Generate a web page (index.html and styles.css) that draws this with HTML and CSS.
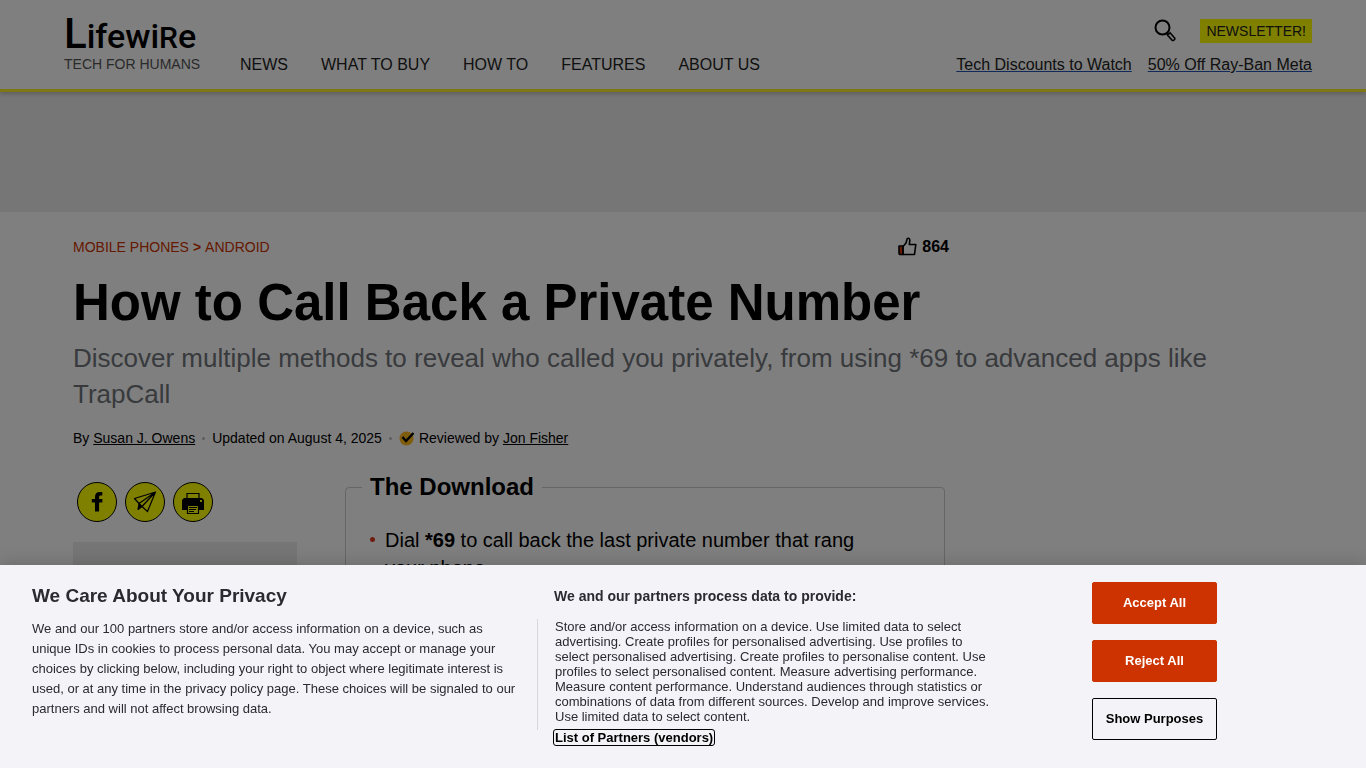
FILE: index.html
```html
<!DOCTYPE html>
<html lang="en">
<head>
    <meta charset="UTF-8">
    <meta name="viewport" content="width=device-width, initial-scale=1.0">
    <title>How to Call Back a Private Number</title>
    <link rel="stylesheet" href="styles.css">
</head>
<body>

<header class="header">
    <a class="brand" href="#">
        <span class="logo"><span class="logo-first">L</span>ifewi<span class="logo-cap">r</span>e</span>
        <span class="tagline">TECH FOR HUMANS</span>
    </a>
    <nav class="main-nav">
        <a href="#">NEWS</a>
        <a href="#">WHAT TO BUY</a>
        <a href="#">HOW TO</a>
        <a href="#">FEATURES</a>
        <a href="#">ABOUT US</a>
    </nav>
    <div class="header-side">
        <div class="header-tools">
            <button class="search-btn" type="button" aria-label="Search">
                <svg width="22" height="24" viewBox="0 0 22 24" fill="none" stroke="#000">
                    <circle cx="8.5" cy="8.5" r="7" stroke-width="2"/>
                    <path d="M12.800 14.200l1.600 1.800" stroke-width="2"/>
                    <path d="M13.500 16l2.600-2.200 4.500 5.200c.9 1.200-1.500 3.400-2.500 2.200z" stroke-width="1.600"/>
                </svg>
            </button>
            <a class="newsletter" href="#">NEWSLETTER!</a>
        </div>
        <div class="header-links">
            <a href="#">Tech Discounts to Watch</a>
            <a href="#">50% Off Ray-Ban Meta</a>
        </div>
    </div>
</header>

<div class="ad-banner"></div>

<main class="article">
    <div class="article-top">
        <nav class="breadcrumbs">
            <a href="#">MOBILE PHONES</a>
            <b>&gt;</b>
            <a href="#">ANDROID</a>
        </nav>
        <div class="likes">
            <svg width="19" height="20" viewBox="0 0 19 20" stroke="#000" stroke-width="1.6" stroke-linejoin="round">
                <path d="M1 9h4v8.500H2Q1 17.500 1 16z" fill="#cc3300"/>
                <path d="M5 9.500L8 6l1.200-4.200c1-1.200 2.700-.3 2.600 1.500L11.300 7.500h6.500l-1.300 10H5z" fill="none"/>
            </svg>
            <span>864</span>
        </div>
    </div>

    <h1>How to Call Back a Private Number</h1>
    <p class="subtitle">Discover multiple methods to reveal who called you privately, from using *69 to advanced apps like TrapCall</p>

    <div class="byline">
        <span>By <a href="#">Susan J. Owens</a></span>
        <i class="dot"></i>
        <span>Updated on August 4, 2025</span>
        <i class="dot"></i>
        <span class="reviewed">
            <svg width="16" height="16" viewBox="0 0 16 16" fill="none">
                <circle cx="7.500" cy="8.500" r="7" fill="#ffb81c"/>
                <path d="M3.500 7l3.500 4L14.500 3" stroke="#000" stroke-width="2.400"/>
            </svg>
            <span>Reviewed by <a href="#">Jon Fisher</a></span>
        </span>
    </div>

    <div class="article-body">
        <aside class="sidebar">
            <div class="share">
                <button type="button" aria-label="Share on Facebook">
                    <svg width="38" height="38" viewBox="0 0 38 38">
                        <path d="M17 28.500V19.500h-3.200v-3.500H17v-2.300c0-3 1.700-4.700 4.500-4.700h2.800v3.600h-1.600c-1.200 0-1.600.6-1.600 1.600v1.800h3.300v3.500h-3.300v9z"/>
                    </svg>
                </button>
                <button type="button" aria-label="Share by email">
                    <svg width="38" height="38" viewBox="0 0 38 38" fill="none" stroke="#000" stroke-width="1.200" stroke-linejoin="round">
                        <path d="M29.500 9L8.500 15.500l4.500 5zM29.500 9L16 23.500l5.500 5zM29.500 9L13 20.500"/>
                        <path d="M13 20.500l-1 6 4-3z" fill="#000"/>
                    </svg>
                </button>
                <button type="button" aria-label="Print">
                    <svg width="38" height="38" viewBox="0 0 38 38">
                        <path d="M13 15v-4.500h12V15" fill="none" stroke="#000" stroke-width="1.200"/>
                        <path d="M10 15h18l2 2v10H8V17z"/>
                        <rect x="26" y="17" width="2" height="2" fill="#ff0"/>
                        <path d="M13.500 22.500h11v8h-11z" fill="#ff0" stroke="#000" stroke-width="1.200"/>
                        <path d="M15 24.500h8M15 26.500h7M15 28.500h5" stroke="#000" stroke-width="1"/>
                    </svg>
                </button>
            </div>
            <div class="side-ad"></div>
        </aside>
        <fieldset class="download">
            <legend>The Download</legend>
            <ul>
                <li>Dial <b>*69</b> to call back the last private number that rang your phone.</li>
            </ul>
        </fieldset>
    </div>
</main>

<div class="overlay"></div>

<section class="consent" role="dialog" aria-labelledby="consent-title">
    <div class="consent-about">
        <h2 id="consent-title">We Care About Your Privacy</h2>
        <p>We and our 100 partners store and/or access information on a device, such as unique IDs in cookies to process personal data. You may accept or manage your choices by clicking below, including your right to object where legitimate interest is used, or at any time in the privacy policy page. These choices will be signaled to our partners and will not affect browsing data.</p>
    </div>
    <div class="consent-purposes">
        <h3>We and our partners process data to provide:</h3>
        <p>Store and/or access information on a device. Use limited data to select advertising. Create profiles for personalised advertising. Use profiles to select personalised advertising. Create profiles to personalise content. Use profiles to select personalised content. Measure advertising performance. Measure content performance. Understand audiences through statistics or combinations of data from different sources. Develop and improve services. Use limited data to select content.</p>
        <button class="vendors" type="button">List of Partners (vendors)</button>
    </div>
    <div class="consent-actions">
        <button class="btn" type="button">Accept All</button>
        <button class="btn" type="button">Reject All</button>
        <button class="btn btn-outline" type="button">Show Purposes</button>
    </div>
</section>

</body>
</html>
```
FILE: styles.css
```css
* {
    box-sizing: border-box;
}
body {
    margin: 0;
    height: 100vh;
    overflow: hidden;
    background-color: #fff;
    color: #000;
    font-family: "Liberation Sans", Arial, sans-serif;
    font-size: 16px;
}
h1, h2, h3, p, ul {
    margin: 0;
}
a {
    color: inherit;
}
button {
    font-family: inherit;
    cursor: pointer;
}
svg {
    display: block;
}

/* Header */
.header {
    position: relative;
    display: flex;
    align-items: flex-end;
    padding: 14px 54px 14px 64px;
    border-bottom: 3px solid #ffee28;
    box-shadow: 0 2px 4px rgba(0, 0, 0, 0.2);
    line-height: 20px;
}
.brand {
    display: flex;
    flex-direction: column;
    width: 176px;
    padding-bottom: 4px;
    text-decoration: none;
}
.logo {
    font-family: Roboto, sans-serif;
    font-size: 34px;
    font-weight: 500;
    line-height: 39px;
}
.logo-first {
    font-size: 42px;
}
.logo-cap {
    font-size: 30px;
    text-transform: uppercase;
}
.tagline {
    color: #555;
    font-size: 14px;
    line-height: 14px;
}
.main-nav {
    display: flex;
    gap: 33px;
}
.main-nav a {
    color: #222;
    text-decoration: none;
}
.header-side {
    display: flex;
    flex-direction: column;
    align-items: flex-end;
    gap: 12px;
    margin-left: auto;
}
.header-tools {
    display: flex;
    align-items: center;
    gap: 24px;
}
.search-btn {
    padding: 0;
    border: 0;
    background: none;
}
.newsletter {
    padding: 2px 6px;
    background-color: #ff0;
    color: #222;
    font-size: 14px;
    text-decoration: none;
}
.header-links {
    display: flex;
    gap: 16px;
}
.header-links a {
    color: #222;
    text-decoration-color: #2355b5;
}
.ad-banner {
    height: 120px;
    background-color: #ececec;
}

/* Article */
.article {
    padding: 22px 73px 0;
}
.article-top {
    display: flex;
    justify-content: space-between;
    align-items: center;
    max-width: 876px;
}
.breadcrumbs {
    display: flex;
    gap: 4px;
    color: #cc3300;
    font-size: 14px;
    line-height: 26px;
}
.breadcrumbs a {
    text-decoration: none;
}
.likes {
    display: flex;
    align-items: center;
    gap: 5px;
    font-weight: bold;
}
h1 {
    margin-top: 13px;
    font-size: 51px;
    line-height: 60px;
}
.subtitle {
    margin-top: 7px;
    color: #70757a;
    font-size: 26px;
    line-height: 36px;
}
.byline {
    display: flex;
    align-items: center;
    gap: 7px;
    margin-top: 16px;
    font-size: 14px;
    line-height: 20px;
}
.dot {
    width: 3px;
    height: 3px;
    border-radius: 50%;
    background-color: #bbb;
}
.reviewed {
    display: flex;
    gap: 4px;
    align-items: center;
}
.article-body {
    display: flex;
    gap: 48px;
    margin-top: 26px;
}
.sidebar {
    width: 224px;
}
.share {
    display: flex;
    gap: 8px;
    padding: 8px 4px 20px;
}
.share button {
    width: 40px;
    height: 40px;
    padding: 0;
    border: 1px solid #000;
    border-radius: 50%;
    background-color: #ff0;
}
.side-ad {
    height: 250px;
    background-color: #ececec;
}
.download {
    width: 600px;
    margin: 0;
    padding: 26px 56px 20px 24px;
    border: 1px solid #ccc;
    border-radius: 4px;
}
.download legend {
    margin-left: -8px;
    padding: 0 8px;
    font-size: 24px;
    font-weight: bold;
    line-height: 26px;
}
.download ul {
    padding-left: 15px;
    font-size: 20px;
    line-height: 28px;
    list-style: none;
}
.download li::before {
    content: "";
    float: left;
    width: 5px;
    height: 5px;
    margin: 11px 0 0 -15px;
    border-radius: 50%;
    background-color: #e03a1e;
}

/* Privacy banner */
.overlay {
    position: fixed;
    inset: 0;
    background-color: rgba(0, 0, 0, 0.5);
}
.consent {
    position: fixed;
    right: 0;
    bottom: 0;
    left: 0;
    display: flex;
    align-items: flex-start;
    padding: 17px 32px 22px;
    background-color: #f3f3f8;
    box-shadow: 0 0 18px rgba(0, 0, 0, 0.2);
    color: #2a2a30;
    font-size: 13px;
}
.consent-about {
    width: 505px;
    padding-right: 16px;
}
.consent h2 {
    margin-bottom: 9px;
    font-size: 19px;
    line-height: 28px;
}
.consent-about p {
    line-height: 20px;
}
.consent-purposes {
    width: 455px;
}
.consent h3 {
    margin-bottom: 9px;
    padding-left: 17px;
    font-size: 14px;
    line-height: 28px;
}
.consent-purposes p {
    padding: 0 0 6px 17px;
    border-left: 1px solid #d8d8d8;
    line-height: 15px;
}
.vendors {
    margin: -3px 0 0 16px;
    padding: 0 1px;
    border: 1px solid #000;
    border-radius: 3px;
    background: none;
    color: #000;
    font-size: 13px;
    font-weight: bold;
    line-height: 15px;
}
.consent-actions {
    display: flex;
    flex-direction: column;
    gap: 16px;
    margin-left: 100px;
}
.btn {
    width: 125px;
    padding: 12px 10px;
    border: 1px solid #cc3300;
    border-radius: 2px;
    background-color: #cc3300;
    color: #fff;
    font-size: 13px;
    font-weight: bold;
    line-height: 16px;
}
.btn-outline {
    border-color: #000;
    background: none;
    color: #000;
}
```
